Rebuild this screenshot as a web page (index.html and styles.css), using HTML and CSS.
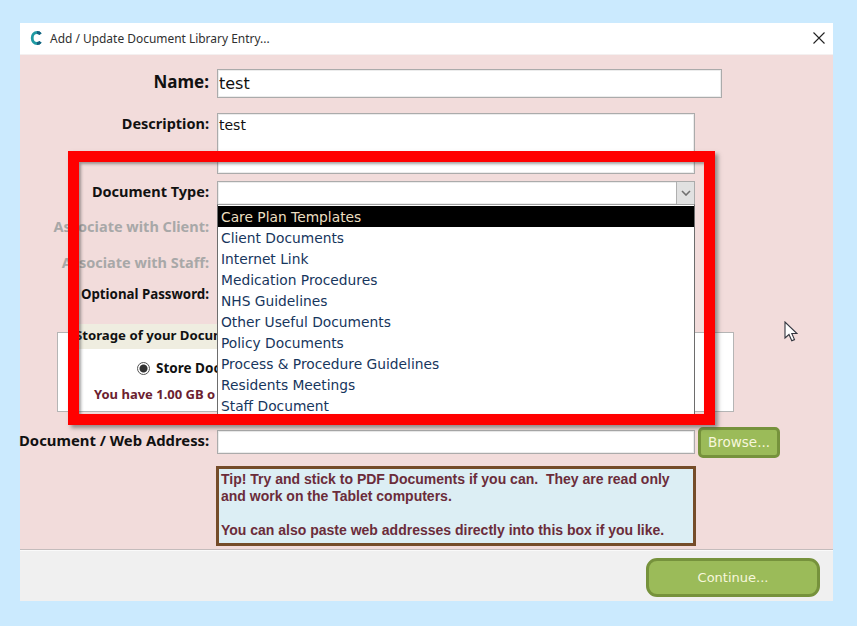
FILE: index.html
```html
<!DOCTYPE html>
<html lang="en">
<head>
<meta charset="utf-8">
<title>Add / Update Document Library Entry</title>
<link rel="stylesheet" href="styles.css">
</head>
<body>
<div class="window">
  <header class="titlebar">
    <svg class="app-icon" width="12" height="14" viewBox="0 0 12 14"><path d="M10.5 3.2C9.6 2 8.4 1.500 7 1.500 4.300 1.500 2.200 3.800 2.200 7s2.100 5.500 4.800 5.500c1.400 0 2.600-.5 3.500-1.700" fill="none" stroke="#1f9aa3" stroke-width="2.800"/><path d="M10.500 3.200C9.600 2 8.400 1.500 7 1.500M7 12.500c1.400 0 2.600-.5 3.500-1.700" fill="none" stroke="#17607f" stroke-width="2.800"/></svg>
    <span class="title-text">Add / Update Document Library Entry...</span>
    <svg class="close-icon" width="12" height="12" viewBox="0 0 12 12"><path d="M.5.5l11 11M11.500.5l-11 11" stroke="#222" stroke-width="1.100" fill="none"/></svg>
  </header>

  <main class="form">
    <div class="row row-name">
      <label class="label label-name">Name:</label>
      <input class="field field-wide field-name" value="test">
    </div>
    <div class="row row-desc">
      <label class="label">Description:</label>
      <textarea class="field field-desc">test</textarea>
    </div>
    <div class="row row-type">
      <label class="label">Document Type:</label>
      <div class="field combo">
        <span class="combo-btn"><svg width="10" height="6" viewBox="0 0 10 6"><path d="M1 1l4 4 4-4" fill="none" stroke="#707070" stroke-width="1.600"/></svg></span>
        <ul class="dropdown">
          <li class="selected">Care Plan Templates</li>
          <li>Client Documents</li>
          <li>Internet Link</li>
          <li>Medication Procedures</li>
          <li>NHS Guidelines</li>
          <li>Other Useful Documents</li>
          <li>Policy Documents</li>
          <li>Process &amp; Procedure Guidelines</li>
          <li>Residents Meetings</li>
          <li>Staff Document</li>
        </ul>
      </div>
    </div>
    <div class="row row-client">
      <label class="label label-off">Associate with Client:</label>
      <div class="field"></div>
    </div>
    <div class="row row-staff">
      <label class="label label-off">Associate with Staff:</label>
      <div class="field"></div>
    </div>
    <div class="row row-pass">
      <label class="label label-small">Optional Password:</label>
      <div class="field"></div>
    </div>

    <section class="storage">
      <h2 class="storage-head">Storage of your Docum</h2>
      <div class="storage-opt"><span class="radio"></span>Store Doc</div>
      <p class="storage-note">You have 1.00 GB o</p>
    </section>

    <div class="row row-doc">
      <label class="label label-big">Document / Web Address:</label>
      <div class="field"></div>
      <button class="btn btn-browse">Browse...</button>
    </div>

    <div class="tip">Tip! Try and stick to PDF Documents if you can.  They are read only
and work on the Tablet computers.

You can also paste web addresses directly into this box if you like.</div>
  </main>

  <footer class="footer">
    <button class="btn btn-continue">Continue...</button>
  </footer>

  <div class="annotation"></div>
  <svg class="cursor" width="14" height="22" viewBox="0 0 14 22"><path d="M1 1v16l4-3.500 2.800 6.300 2.700-1.200L7.800 12.500H13z" fill="#fff" stroke="#33363f" stroke-width="1.100"/></svg>
</div>
</body>
</html>
```

FILE: styles.css
```css
* { box-sizing: border-box; }
html, body { height: 100%; }
body {
  margin: 0;
  padding: 23px 24px 25px 20px;
  background: #cbeafe;
  font-family: "Noto Sans", "DejaVu Sans", sans-serif;
  overflow: hidden;
}
.window {
  position: relative;
  display: flex;
  flex-direction: column;
  height: 578px;
  background: #f2dcdb;
}
.titlebar {
  display: flex;
  align-items: center;
  height: 32px;
  padding: 0 8px 0 10px;
  background: #fff;
  border-bottom: 1px solid #f4f0f0;
  flex: none;
}
.app-icon { flex: none; margin-bottom: 2px; }
.title-text {
  margin-left: 8px;
  font-size: 11.950px;
  color: #303030;
  flex: 1;
}
.close-icon { flex: none; margin-bottom: 2px; }

.form {
  flex: 1;
  padding-top: 14px;
  border-bottom: 1px solid #c4bcbc;
}
.row {
  display: flex;
  align-items: flex-start;
  height: 24px;
}
.label {
  flex: none;
  width: 189px;
  margin-right: 8px;
  text-align: right;
  font-size: 14.500px;
  font-weight: 700;
  line-height: 20px;
  color: #111;
  white-space: nowrap;
}
.label-off { color: #a8a8a8; }
.label-name { font-size: 17px; line-height: 26px; }
.label-small { font-size: 13.300px; }
.label-big { width: 190px; margin-left: -1px; font-size: 14.850px; }
.field {
  display: block;
  width: 478px;
  height: 24px;
  border: 1px solid #ababab;
  box-shadow: inset 0 0 0 1px #ececec;
  background: #fff;
  outline: none;
  padding: 0 1px;
  margin: 0;
  font-family: "DejaVu Sans", sans-serif;
  color: #111;
  resize: none;
}
.field-wide { width: 505px; }
.field-name { height: 29px; font-size: 16px; }
.field-desc { height: 61px; padding-top: 1px; font-size: 14px; line-height: 20px; }

.row-name { height: 29px; }
.row-desc { height: 61px; margin-top: 15px; }
.row-type { margin-top: 7px; }
.row-client { margin-top: 12px; }
.row-client .label { margin-top: -1px; }
.row-staff { margin-top: 11px; }
.row-pass { margin-top: 8px; }
.row-doc { margin-top: 18px; }

.combo { position: relative; }
.combo-btn {
  position: absolute;
  top: 0;
  right: 0;
  width: 18px;
  height: 22px;
  display: flex;
  align-items: center;
  justify-content: center;
  background: #e1e1e1;
  border-left: 1px solid #b0b0b0;
}
.dropdown {
  position: absolute;
  top: 22px;
  left: -1px;
  width: 478px;
  height: 211px;
  margin: 0;
  padding: 1px 0 0;
  list-style: none;
  background: #fff;
  border: 1px solid #6d6d6d;
  border-top: 1px solid #a0a0a0;
  z-index: 2;
}
.dropdown li {
  height: 21px;
  padding-left: 3px;
  font-family: "DejaVu Sans", sans-serif;
  font-size: 13.800px;
  line-height: 23px;
  color: #17365d;
  white-space: nowrap;
}
.dropdown .selected { background: #000; color: #ecdfc0; }

.storage {
  position: relative;
  width: 677px;
  height: 80px;
  margin: 24px 0 0 37px;
  background: #fff;
  border: 1px solid #b5b5b5;
}
.storage-head {
  position: absolute;
  top: -9px;
  left: 15px;
  width: 300px;
  height: 25px;
  margin: 0;
  padding-left: 2px;
  background: #efede0;
  font-size: 13.200px;
  font-weight: 700;
  line-height: 23px;
  color: #111;
  white-space: nowrap;
}
.storage-opt {
  display: flex;
  align-items: center;
  margin: 25px 0 0 79px;
  font-size: 13.500px;
  font-weight: 700;
  line-height: 20px;
  color: #111;
}
.radio {
  width: 13px;
  height: 13px;
  margin-right: 6px;
  border: 1px solid #555;
  border-radius: 50%;
  background: radial-gradient(circle, #333 0 3.500px, #fff 4.500px);
}
.storage-note {
  margin: 6px 0 0 36px;
  font-size: 13px;
  font-weight: 700;
  line-height: 20px;
  color: #6b2130;
}

.btn {
  font-family: "DejaVu Sans", sans-serif;
  background: #9bbb59;
  border: 3px solid #76923c;
  color: #f7f7dc;
  padding: 0 0 1px;
}
.btn-browse {
  flex: none;
  width: 82px;
  height: 31px;
  margin: -3px 0 0 3px;
  border-radius: 5px;
  font-size: 13.500px;
}
.btn-continue {
  width: 174px;
  height: 39px;
  border-radius: 11px;
  font-size: 13px;
}

.tip {
  width: 480px;
  height: 80px;
  margin: 12px 0 0 196px;
  padding: 2px 0 0 2px;
  border: 3px solid #754c29;
  background: #dceef4;
  font-family: "Liberation Sans", Arial, sans-serif;
  font-size: 14px;
  font-weight: 700;
  line-height: 17px;
  color: #6b2c3a;
  white-space: pre-wrap;
}

.footer {
  flex: none;
  display: flex;
  justify-content: flex-end;
  align-items: flex-start;
  height: 51px;
  padding: 7px 13px 0 0;
  background: #f0f0f0;
  border-top: 1px solid #fafafa;
}

.annotation {
  position: absolute;
  left: 48px;
  top: 128px;
  width: 647px;
  height: 274px;
  border: 11px solid #f00;
  box-shadow: 3px 3px 4px rgba(70, 70, 70, .55), inset 2px 2px 3px rgba(70, 70, 70, .5);
  z-index: 3;
}
.cursor {
  position: absolute;
  left: 764px;
  top: 298px;
  z-index: 3;
}
```
